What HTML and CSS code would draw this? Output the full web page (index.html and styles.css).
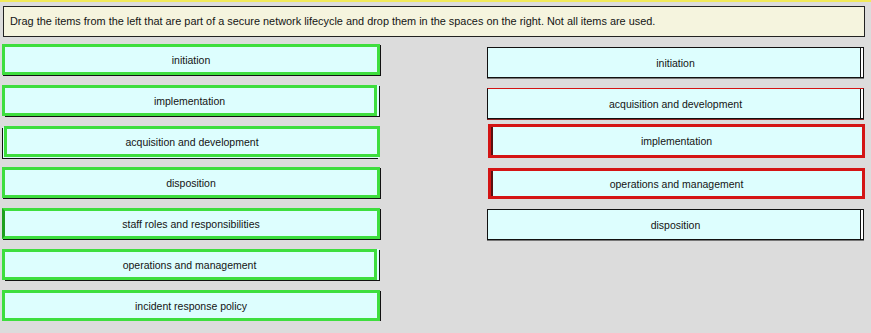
FILE: index.html
```html
<!DOCTYPE html>
<html lang="en">
<head>
  <meta charset="UTF-8">
  <meta name="viewport" content="width=device-width, initial-scale=1.0">
  <title>Secure Network Lifecycle</title>
  <link rel="stylesheet" href="styles.css">
</head>
<body>
  <div class="question">
    Drag the items from the left that are part of a secure network lifecycle and drop them in the spaces on the right. Not all items are used.
  </div>

  <div class="board">
    <div class="choices">
      <div class="item slot-below">initiation</div>
      <div class="item slot-right">implementation</div>
      <div class="item slot-left">acquisition and development</div>
      <div class="item slot-below">disposition</div>
      <div class="item slot-below edge-left">staff roles and responsibilities</div>
      <div class="item slot-right">operations and management</div>
      <div class="item slot-below">incident response policy</div>
    </div>

    <div class="targets">
      <div class="target">initiation</div>
      <div class="target red-top">acquisition and development</div>
      <div class="target wrong tall">implementation</div>
      <div class="target wrong">operations and management</div>
      <div class="target">disposition</div>
    </div>
  </div>
</body>
</html>
```

FILE: styles.css
```css
:root {
  --bg: #dcdcdc;
  --cyan: #ddfefe;
  --green: #3ede3e;
  --red: #d41414;
}

body {
  margin: 0;
  background: var(--bg);
  border-top: 2px solid #f2ea5a;
  font-family: "Liberation Sans", Arial, sans-serif;
  font-size: 10.5px;
  color: #141414;
}

.question {
  margin: 4px 6px 0 3px;
  padding: 0 6px;
  height: 29px;
  line-height: 29px;
  font-size: 10.9px;
  background: #f5f4de;
  border: 1px solid #222;
}

.board {
  display: grid;
  grid-template-columns: 378px 377px;
  column-gap: 107px;
  padding: 7px 0 0 2px;
}

.choices, .targets {
  display: flex;
  flex-direction: column;
  gap: 10px;
}

.targets {
  padding-top: 3px;
}

.item, .target {
  height: 31px;
  box-sizing: border-box;
  display: flex;
  align-items: center;
  justify-content: center;
  background: var(--cyan);
}

.item {
  border: 3px solid var(--green);
}

/* the empty black slot peeking out from under the dragged item */
.slot-below {
  box-shadow: 1px 1px 0 #111;
}

.slot-right {
  margin-right: 3px;
  box-shadow: 2px 0 0 var(--cyan), 3px 1px 0 #111;
}

.slot-left {
  margin-left: 2px;
  box-shadow: -1px 1px 0 var(--cyan), -2px 2px 0 #111;
}

.edge-left {
  border-left-color: #1ea01e;
}

.target {
  border: 1px solid #111;
  box-shadow: inset -2px 0 0 #fff, inset -3px 0 0 #111, 0 1px 0 #777;
}

.red-top {
  border-top: 1px solid var(--red);
  box-shadow: inset -2px 0 0 #fff, inset -3px 0 0 #111, 0 1px 0 #8a2020;
}

.wrong {
  border: 3px solid var(--red);
  box-shadow: inset 2px 0 0 #5a1010;
  margin-left: 1px;
  margin-right: -1px;
}

.tall {
  height: 34px;
  margin-top: -5px;
}
```
